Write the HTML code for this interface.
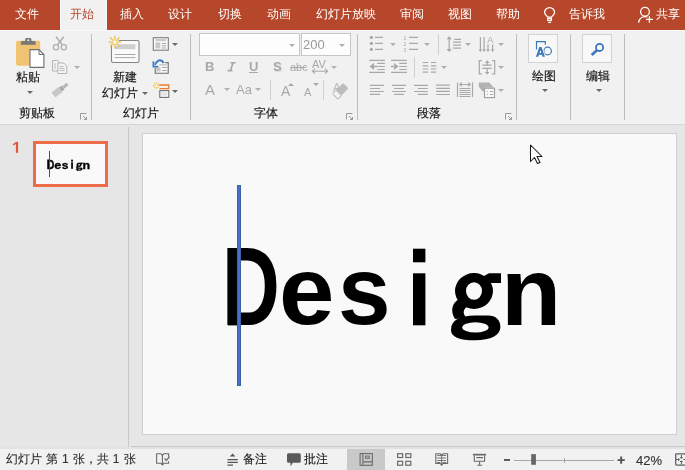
<!DOCTYPE html>
<html><head><meta charset="utf-8">
<style>
*{margin:0;padding:0;box-sizing:border-box}
html,body{width:685px;height:470px;overflow:hidden;background:#f1f1f1;font-family:"Liberation Sans",sans-serif}
.a{position:absolute}
.t{position:absolute;font-size:12px;line-height:12px;white-space:nowrap;will-change:transform}
#tabs{left:0;top:0;width:685px;height:30px;background:#b7472a}
.tab{color:#fff;font-size:12.4px}
#ribbon{left:0;top:30px;width:685px;height:95px;background:#f1f1f1;border-top:1px solid #f8fafa;border-bottom:1px solid #d6d6d6}
.sep{position:absolute;width:1px;background:#bdbdbd}
.lbl{color:#1a1a1a;-webkit-text-stroke:0.2px #1a1a1a}
.dk{color:#262626;-webkit-text-stroke:0.15px currentColor}
.arr{position:absolute;width:0;height:0;border-left:3px solid transparent;border-right:3px solid transparent;border-top:3px solid #6a6a6a}
.arrl{position:absolute;width:0;height:0;border-left:3px solid transparent;border-right:3px solid transparent;border-top:3px solid #b0b0b0}
#pane{left:0;top:125px;width:685px;height:322px;background:#e6e6e6}
#status{left:0;top:447px;width:685px;height:23px;background:#f1f1f1;border-top:2px solid #e2e2e2}
svg{position:absolute;overflow:visible}
.thumb div{-webkit-text-stroke:3px #000}
.thumb svg rect,.thumb svg path{stroke:#000;stroke-width:3px}
</style></head><body>

<!-- TAB BAR -->
<div id="tabs" class="a"></div>
<div class="a" style="left:60px;top:0;width:47px;height:31px;background:#f1f1f1;border-left:1px solid #f8fafa;border-right:1px solid #f8fafa"></div>
<div class="t tab" style="left:15px;top:8px">文件</div>
<div class="t" style="left:70px;top:8px;color:#b7472a;font-size:12.4px">开始</div>
<div class="t tab" style="left:119.5px;top:8px">插入</div>
<div class="t tab" style="left:168px;top:8px">设计</div>
<div class="t tab" style="left:217.5px;top:8px">切换</div>
<div class="t tab" style="left:266.5px;top:8px">动画</div>
<div class="t tab" style="left:316px;top:8px">幻灯片放映</div>
<div class="t tab" style="left:400px;top:8px">审阅</div>
<div class="t tab" style="left:448px;top:8px">视图</div>
<div class="t tab" style="left:496px;top:8px">帮助</div>
<div class="t tab" style="left:568.5px;top:8px">告诉我</div>
<div class="t tab" style="left:656px;top:8px">共享</div>
<svg style="left:0;top:0" width="685" height="29">
  <g fill="none" stroke="#fff" stroke-width="1.3">
    <path d="M547.8 17.2 C546 15.3 544.6 14 544.6 12.6 A5 5 0 0 1 554.6 12.6 C554.6 14 553.2 15.3 551.4 17.2 Z"/>
    <rect x="547.8" y="18.4" width="3.6" height="2"/><path d="M548.2 22.4h2.8"/>
    <circle cx="645" cy="11.7" r="4.4"/>
    <path d="M638.6 22.6 C639.2 19 641.8 16.6 645.2 16.6 C646 16.6 646.8 16.7 647.5 17"/>
    <path d="M649.4 16.2v6.6M646 19.4h6.9"/>
  </g>
</svg>

<!-- RIBBON -->
<div id="ribbon" class="a"></div>
<div class="sep" style="left:91px;top:34px;height:86px"></div>
<div class="sep" style="left:190px;top:34px;height:86px"></div>
<div class="sep" style="left:357px;top:34px;height:86px"></div>
<div class="sep" style="left:516px;top:34px;height:86px"></div>
<div class="sep" style="left:570px;top:34px;height:86px"></div>
<div class="sep" style="left:624px;top:34px;height:86px"></div>

<!-- clipboard group -->
<svg style="left:0;top:0" width="685" height="125">
  <!-- paste -->
  <rect x="16" y="40.8" width="24.2" height="25" rx="2" fill="#efc371"/>
  <path d="M20.8 44.8 V42.5 Q20.8 41 22.3 41 H25.2 V39.5 Q25.2 38.1 26.6 38.1 H30 Q31.4 38.1 31.4 39.5 V41 H34.2 Q35.7 41 35.7 42.5 V44.8 Z" fill="#777"/>
  <circle cx="28.3" cy="40.2" r="1" fill="#f1f1f1"/>
  <path d="M30 49.6 H39 L43.9 54.5 V67.4 H30 Z" fill="#fff" stroke="#6e6e6e" stroke-width="1.1"/>
  <path d="M39 49.6 V54.5 H43.9" fill="none" stroke="#6e6e6e" stroke-width="1"/>
  <!-- scissors -->
  <g stroke="#b0b0b0" stroke-width="1.3" fill="none">
    <circle cx="56" cy="47.2" r="2.6"/><circle cx="63.8" cy="47.2" r="2.6"/>
  </g>
  <path d="M57.3 45 L63.8 36.8 M62.5 45 L56 36.8" stroke="#b0b0b0" stroke-width="1.6" fill="none"/>
  <!-- copy -->
  <g stroke="#b4b4b4" stroke-width="1" fill="#f4f4f4">
    <path d="M52.5 60.5h5l2.5 2.5v8h-7.5z"/><path d="M57.8 63h6l3 3v7.5h-9z"/>
  </g>
  <path d="M54 64h2M54 66h2M54 68h2M59.5 66.5h4M59.5 68.5h5M59.5 70.5h5" stroke="#b4b4b4" stroke-width="0.9"/>
  <!-- format painter -->
  <g transform="translate(60.5 89.5) rotate(-38)">
    <rect x="-9" y="-3.2" width="9" height="6.4" fill="#c8c8c8"/>
    <rect x="0" y="-2.4" width="3" height="4.8" fill="#a8a8a8"/>
    <rect x="3" y="-1.6" width="6" height="3.2" fill="#b8b8b8"/>
  </g>
  <!-- launcher -->
  <g stroke="#9a9a9a" stroke-width="1" fill="none">
    <path d="M80.5 119.5v-6h6"/><path d="M83 116l3.5 3.5M86.5 117v2.5h-2.5"/>
  </g>

  <!-- new slide -->
  <rect x="111.5" y="40.5" width="27.5" height="22" rx="1.5" fill="#fafafa" stroke="#858585" stroke-width="1.1"/>
  <rect x="114.6" y="44.2" width="20.8" height="5" fill="#cfcfcf"/>
  <path d="M114.6 54.5h20.8M114.6 57.6h20.8" stroke="#a8a8a8" stroke-width="1"/>
  <circle cx="114.9" cy="42.1" r="4.2" fill="#f1f1f1"/>
  <g stroke="#f0c050" stroke-width="1.4">
    <path d="M114.9 35.8v3.3M114.9 45.1v3.3M108.6 42.1h3.3M117.9 42.1h3.3M110.4 37.6l2.3 2.3M117.1 44.3l2.3 2.3M119.4 37.6l-2.3 2.3M112.7 44.3l-2.3 2.3"/>
  </g>
  <circle cx="114.9" cy="42.1" r="2.3" fill="#fffdf5" stroke="#f0c050" stroke-width="1"/>
  <!-- layout -->
  <rect x="153.3" y="37.7" width="15" height="12.5" fill="#fafafa" stroke="#7e7e7e" stroke-width="1.1"/>
  <rect x="155.4" y="38.9" width="10.6" height="2.3" fill="#c8c8c8"/>
  <rect x="155.4" y="42.4" width="4.9" height="6" fill="#c8c8c8"/>
  <path d="M161.8 43.5h4.3M161.8 45.8h4.3M161.8 48h4.3" stroke="#9a9a9a" stroke-width="0.9"/>
  <!-- reset -->
  <rect x="155.2" y="62.6" width="13" height="10.6" fill="#fafafa"/>
  <path d="M155.2 67.8 V73.2 H168.2 V62.6 H165.2" fill="none" stroke="#6e6e6e" stroke-width="1.1"/>
  <rect x="159.2" y="64.1" width="7.5" height="1.6" fill="#c8c8c8"/>
  <rect x="156.2" y="67.2" width="4.4" height="4.3" fill="#c8c8c8"/>
  <path d="M162 67.5h4.7M162 70.5h4.7" stroke="#9a9a9a" stroke-width="0.9"/>
  <path d="M163.6 63.2 Q162.5 60.3 159.8 60.3 Q157.5 60.3 155 64.8" fill="none" stroke="#3b7cc2" stroke-width="1.9"/>
  <path d="M153.4 61.3 V66.6 H158.3" fill="none" stroke="#3b7cc2" stroke-width="1.7"/>
  <!-- section -->
  <path d="M159 85h9.7v3.6h-9.2" fill="none" stroke="#ee7d32" stroke-width="1.3"/>
  <rect x="159.8" y="90.6" width="9" height="6.8" fill="#fafafa" stroke="#707070" stroke-width="1.1"/>
  <rect x="161.3" y="92.2" width="5.8" height="3.4" fill="#e4e4e4"/>
  <g stroke="#f0c050" stroke-width="1"><path d="M156.3 82.2v6.8M152.9 85.6h6.8M153.9 83.2l4.8 4.8M158.7 83.2l-4.8 4.8"/></g>
  <circle cx="156.3" cy="85.6" r="1.3" fill="#fffdf5"/>
</svg>
<div class="t lbl" style="left:16px;top:71px;font-size:12px">粘贴</div>
<div class="arr" style="left:27px;top:91px"></div>
<div class="arrl" style="left:74px;top:66px"></div>
<div class="t lbl" style="left:19px;top:107px">剪贴板</div>
<div class="t lbl" style="left:113px;top:71px">新建</div>
<div class="t lbl" style="left:102px;top:87px">幻灯片</div>
<div class="arr" style="left:142px;top:92px"></div>
<div class="arr" style="left:172px;top:43px"></div>
<div class="arr" style="left:172px;top:90px"></div>
<div class="t lbl" style="left:123px;top:107px">幻灯片</div>

<!-- font group -->
<div class="a" style="left:199px;top:33px;width:101px;height:23px;background:#fdfdfd;border:1px solid #c6c6c6"></div>
<div class="a" style="left:301px;top:33px;width:50px;height:23px;background:#fdfdfd;border:1px solid #c6c6c6"></div>
<div class="arrl" style="left:289px;top:44px"></div>
<div class="arrl" style="left:339px;top:44px"></div>
<div class="t" style="left:303px;top:38px;font-size:13px;line-height:13px;color:#9a9a9a">200</div>
<div class="t" style="left:205px;top:61px;font-size:13px;font-weight:bold;color:#a8a8a8">B</div>

<div class="t" style="left:249px;top:61px;font-size:13px;font-weight:bold;color:#a8a8a8">U</div><div class="a" style="left:249px;top:72px;width:9px;height:1px;background:#a8a8a8"></div>
<div class="t" style="left:273px;top:61px;font-size:13px;font-weight:bold;color:#a8a8a8;text-shadow:1px 1px 1px #d8d8d8">S</div>
<div class="t" style="left:290px;top:62px;font-size:11px;line-height:11px;color:#a8a8a8">abc</div><div class="a" style="left:290px;top:67px;width:16px;height:1px;background:#a8a8a8"></div>
<div class="t" style="left:312px;top:59px;font-size:11px;line-height:11px;color:#a8a8a8">AV</div>
<svg style="left:0;top:0" width="685" height="125">
  <path d="M312.5 71.2h15M315 68.7l-2.5 2.5l2.5 2.5M325 68.7l2.5 2.5l-2.5 2.5" stroke="#a8a8a8" stroke-width="1.1" fill="none"/>
  <path d="M230.5 62.8h5M227.5 70.6h5M233 62.8l-2.5 7.8" stroke="#a8a8a8" stroke-width="1.6" fill="none"/>
  <path d="M291 96l5-12l5 12" fill="none" stroke="#fff" stroke-width="0"/>
  <!-- grow/shrink triangles -->
  <path d="M291 83l3 3h-6z" fill="#a8a8a8"/>
  <path d="M313 83h6l-3 3z" fill="#a8a8a8"/>
  <!-- eraser -->
  <g transform="translate(340.5 91) rotate(-45)"><rect x="-7.5" y="-3.8" width="15" height="7.6" rx="1.5" fill="#bdbdbd"/><rect x="-7.5" y="-3.8" width="5" height="7.6" rx="1" fill="#f4f4f4" stroke="#bdbdbd" stroke-width="1"/></g>
</svg>
<div class="arrl" style="left:331px;top:66px"></div>
<div class="t" style="left:205px;top:82px;font-size:15px;line-height:15px;color:#a8a8a8">A</div>
<div class="arrl" style="left:224px;top:88px"></div>
<div class="t" style="left:236px;top:83px;font-size:13px;line-height:13px;color:#a8a8a8">Aa</div>
<div class="arrl" style="left:255px;top:88px"></div>
<div class="sep" style="left:270px;top:80px;height:20px;background:#d0d0d0"></div>
<div class="t" style="left:281px;top:84px;font-size:14px;line-height:14px;color:#a8a8a8">A</div>
<div class="t" style="left:304px;top:87px;font-size:11px;line-height:11px;color:#a8a8a8">A</div>
<div class="sep" style="left:323px;top:80px;height:20px;background:#d0d0d0"></div>
<div class="t" style="left:333px;top:82px;font-size:11px;line-height:11px;color:#b8b8b8">A</div>
<div class="t lbl" style="left:254px;top:107px">字体</div>

<!-- paragraph group -->
<svg style="left:0;top:0" width="685" height="125">
  <g fill="#a8a8a8">
    <circle cx="371.4" cy="37.4" r="1.6"/><circle cx="371.4" cy="43.4" r="1.6"/><circle cx="371.4" cy="49.3" r="1.6"/>
  </g>
  <g stroke="#a8a8a8" stroke-width="1.2" fill="none">
    <path d="M375 37.4h8M375 43.4h8M375 49.3h8"/>
    <path d="M409 37.4h9M409 43.4h9M409 49.3h9"/>
    <!-- indent -->
    <path d="M369.2 60.3h15.7M377.2 63.4h7.7M377.2 66.5h7.7M377.2 69.5h7.7M369.2 72.4h15.7"/>
    <path d="M391.2 60.3h15.7M399.2 63.4h7.7M399.2 66.5h7.7M399.2 69.5h7.7M391.2 72.4h15.7"/>
    <!-- columns -->
    <path d="M422.7 62.5h5.5M422.7 65.8h5.5M422.7 69h5.5M422.7 72.2h5.5M430.8 62.5h5.5M430.8 65.8h5.5M430.8 69h5.5M430.8 72.2h5.5"/>
    <!-- line spacing -->
    <path d="M449.2 37.5v13.5M454.3 39.4h6.7M453.1 42.2h7.9M453.1 45.1h7.9M453.1 48.1h7.9"/>
    <!-- text direction -->
    <path d="M480.4 37v14M484.1 37v14M488 44.5v6.5M492.6 44.5v6.5"/>
    <!-- align text -->
    <path d="M481.9 60.6h-2.6v13.3h2.6M492.1 60.6h2.6v13.3h-2.6M487.2 61v5M487.2 69v5M482.4 65.2h9.2M482.4 68.3h9.2"/>
    <!-- align rows -->
    <path d="M369.9 85.4h14M369.9 88.5h10.2M369.9 91.5h14M369.9 94.4h10.2"/>
    <path d="M392.1 85.4h13.8M394.1 88.5h9.9M392.1 91.5h13.8M394.1 94.4h9.9"/>
    <path d="M414 85.4h13.8M417.9 88.5h9.9M414 91.5h13.8M417.9 94.4h9.9"/>
    <path d="M436.1 85.1h13.8M436.1 88.3h13.8M436.1 91.4h13.8M436.1 94.5h13.8"/>
    <!-- distributed -->
    <path d="M457.5 82.4v14.6M472.5 82.4v14.6M460 84.5h10"/>
    <path d="M459.5 88.5h11M459.5 90.5h11M459.5 92.5h11M459.5 94.5h11M459.5 96.5h11" stroke-width="1"/>
    <path d="M461.8 82.4l-2 2l2 2M468.2 82.4l2 2l-2 2"/>
    <!-- smartart box -->
    <rect x="484.5" y="88.2" width="10" height="9.4" fill="#f8f8f8" stroke="#a0a0a0"/>
  </g>
  <g fill="#a8a8a8">
    <path d="M369.5 66.5l4.5-3.5v7z M374 65.8h3v1.5h-3z"/>
    <path d="M398.5 66.5l-4.5-3.5v7z M391 65.8h3.5v1.5h-3.5z"/>
    <path d="M449.2 36.3l-2.7 3h5.4z M449.2 52l-2.7-3h5.4z"/>
    <path d="M480.4 52l-1.8-2.6h3.6z M484.1 52l-1.8-2.6h3.6z M488 52l-1.8-2.6h3.6z M492.6 52l-1.8-2.6h3.6z"/>
    <path d="M487.2 60.3l-2.3 2.6h4.6z M487.2 74.5l-2.3-2.6h4.6z"/>
    <path d="M478.8 82.4h10.5l4.5 5.3h-9.8v3.5h-1.7l-3.5 -4.4z" fill="#b2b2b2"/>
  </g>
  <text x="487.3" y="43.4" font-family="Liberation Sans" font-size="9" fill="#a8a8a8">A</text>
  <text x="403.6" y="40.3" font-family="Liberation Sans" font-size="5" fill="#a8a8a8">1</text>
  <text x="403.6" y="46.3" font-family="Liberation Sans" font-size="5" fill="#a8a8a8">2</text>
  <text x="403.6" y="52.2" font-family="Liberation Sans" font-size="5" fill="#a8a8a8">3</text>
  <g stroke="#a8a8a8" stroke-width="1" fill="none"><path d="M487 91.5h1M490 91.5h3M487 94.5h1M490 94.5h3"/></g>
  <!-- launcher -->
  <g stroke="#9a9a9a" stroke-width="1" fill="none">
    <path d="M505.5 119.5v-6h6"/><path d="M508 116l3.5 3.5M511.5 117v2.5h-2.5"/>
    <path d="M346.5 119.5v-6h6"/><path d="M349 116l3.5 3.5M352.5 117v2.5h-2.5"/>
  </g>
  <rect x="438" y="34" width="1" height="21" fill="#d0d0d0"/>
  <rect x="414" y="57" width="1" height="21" fill="#d0d0d0"/>
</svg>
<div class="arrl" style="left:390px;top:43px"></div>
<div class="arrl" style="left:424px;top:43px"></div>
<div class="arrl" style="left:465px;top:43px"></div>
<div class="arrl" style="left:498px;top:43px"></div>
<div class="arrl" style="left:441px;top:66px"></div>
<div class="arrl" style="left:498px;top:66px"></div>
<div class="arrl" style="left:498px;top:89px"></div>
<div class="t lbl" style="left:417px;top:107px">段落</div>

<!-- drawing / editing -->
<div class="a" style="left:528px;top:34px;width:30px;height:29px;background:#f8f8f8;border:1px solid #d2d2d2"></div>
<div class="a" style="left:582px;top:34px;width:30px;height:29px;background:#f8f8f8;border:1px solid #d2d2d2"></div>
<svg style="left:0;top:0" width="685" height="125">
  <path d="M536.5 49.5 V41.6 H545.3 V44.8" fill="none" stroke="#3c78b8" stroke-width="1.2"/>
  <circle cx="547.6" cy="51" r="3.8" fill="none" stroke="#3c78b8" stroke-width="1.2"/>
  <path d="M535.9 56.8 L539.3 47 H541.5 L544.9 56.8 Z" fill="#f8f8f8" stroke="#f8f8f8" stroke-width="1.6"/>
  <path d="M535.9 56.8 L539.3 47 H541.5 L544.9 56.8 H542.6 L541.9 54.7 H538.9 L538.2 56.8 Z M539.5 53 H541.3 L540.4 50 Z" fill="#3c78b8" fill-rule="evenodd"/>
  <circle cx="599.6" cy="47.4" r="3.6" fill="none" stroke="#3c78b8" stroke-width="1.8"/>
  <path d="M597.3 50 L591.6 54.9" stroke="#3c78b8" stroke-width="2.7"/>
</svg>
<div class="t lbl" style="left:532px;top:70px">绘图</div>
<div class="t lbl" style="left:586px;top:70px">编辑</div>
<div class="arr" style="left:542px;top:89px"></div>
<div class="arr" style="left:596px;top:89px"></div>

<!-- PANE -->
<div id="pane" class="a"></div>
<div class="a" style="left:128px;top:127px;width:1px;height:320px;background:#c8c8c8"></div>
<div class="a" style="left:131px;top:446px;width:554px;height:1px;background:#c8c8c8"></div>
<svg style="left:0;top:0" width="30" height="160"><rect x="15.9" y="141.8" width="2.2" height="11" fill="#e05a38"/><path d="M16.5 142.6 L13.2 144.8" stroke="#e05a38" stroke-width="1.6"/></svg>
<div class="a" style="left:33px;top:141px;width:75px;height:46px;border:3px solid #ed6d4a;background:#f9f9f9"></div>
<div class="a" style="left:142px;top:133px;width:535px;height:302px;border:1px solid #d0d0d0;background:#f9f9f9"></div>


<!-- DESIGN TEXT -->
<div class="a" style="left:0;top:0;width:685px;height:470px">
<div class="a" style="left:222.2px;top:230.2px;font:bold 100px/100px 'Liberation Sans',sans-serif;color:#000;transform-origin:0 0;transform:scale(0.8,1.12)">D</div>
<div class="a" style="left:279.3px;top:243.3px;font:bold 100px/100px 'Liberation Sans',sans-serif;color:#000;transform-origin:0 0;transform:scale(0.996,0.958)">e</div>
<div class="a" style="left:337.9px;top:243.3px;font:bold 100px/100px 'Liberation Sans',sans-serif;color:#000;transform-origin:0 0;transform:scale(0.945,0.958)">s</div>
<div class="a" style="left:500.8px;top:243.8px;font:bold 100px/100px 'Liberation Sans',sans-serif;color:#000;transform-origin:0 0;transform:scale(0.985,0.956)">n</div>
<svg style="left:0;top:0" width="685" height="470">
  <rect x="228" y="248.4" width="13" height="77" fill="#000"/>
  <rect x="413" y="248.7" width="12.4" height="13.6" fill="#000"/>
  <rect x="413" y="273.3" width="12.4" height="52" fill="#000"/>
  <path fill="#000" fill-rule="evenodd" d="M455 291 a19 17.9 0 1 0 38 0 a19 17.9 0 1 0 -38 0 Z M466 291 a8 8.75 0 1 0 16 0 a8 8.75 0 1 0 -16 0 Z"/>
  <path fill="#000" d="M484 276 L489 273.2 L501 273.2 L501 283 L488 283 Z"/>
  <path fill="#000" fill-rule="evenodd" d="M451 330 C451 320 460 315.4 475 315.4 L488 315.4 C496 315.4 500.4 320 500.4 327 C500.4 335 491 340.3 475 340.3 C459 340.3 451 337 451 330 Z M462.2 327.4 a13.2 5.2 0 1 0 26.4 0 a13.2 5.2 0 1 0 -26.4 0 Z"/>
  <path fill="#000" d="M459 299 C452 303 450 311 455 319 L467 318 C462 314 463 309 468 306 Z"/>
</svg>

</div>
<div class="a" style="left:237px;top:185px;width:4px;height:201px;background:#4472c4;border:1px solid #3a62a8"></div>
<!-- THUMB -->
<div class="a thumb" style="left:0;top:0;width:685px;height:470px;transform-origin:0 0;transform:translate(37px,146.6px) scale(0.127,0.116) translate(-143px,-134px);will-change:transform">
<div class="a" style="left:222.2px;top:230.2px;font:bold 100px/100px 'Liberation Sans',sans-serif;color:#000;transform-origin:0 0;transform:scale(0.8,1.12)">D</div>
<div class="a" style="left:279.3px;top:243.3px;font:bold 100px/100px 'Liberation Sans',sans-serif;color:#000;transform-origin:0 0;transform:scale(0.996,0.958)">e</div>
<div class="a" style="left:337.9px;top:243.3px;font:bold 100px/100px 'Liberation Sans',sans-serif;color:#000;transform-origin:0 0;transform:scale(0.945,0.958)">s</div>
<div class="a" style="left:500.8px;top:243.8px;font:bold 100px/100px 'Liberation Sans',sans-serif;color:#000;transform-origin:0 0;transform:scale(0.985,0.956)">n</div>
<svg style="left:0;top:0" width="685" height="470">
  <rect x="228" y="248.4" width="13" height="77" fill="#000"/>
  <rect x="413" y="248.7" width="12.4" height="13.6" fill="#000"/>
  <rect x="413" y="273.3" width="12.4" height="52" fill="#000"/>
  <path fill="#000" fill-rule="evenodd" d="M455 291 a19 17.9 0 1 0 38 0 a19 17.9 0 1 0 -38 0 Z M466 291 a8 8.75 0 1 0 16 0 a8 8.75 0 1 0 -16 0 Z"/>
  <path fill="#000" d="M484 276 L489 273.2 L501 273.2 L501 283 L488 283 Z"/>
  <path fill="#000" fill-rule="evenodd" d="M451 330 C451 320 460 315.4 475 315.4 L488 315.4 C496 315.4 500.4 320 500.4 327 C500.4 335 491 340.3 475 340.3 C459 340.3 451 337 451 330 Z M462.2 327.4 a13.2 5.2 0 1 0 26.4 0 a13.2 5.2 0 1 0 -26.4 0 Z"/>
  <path fill="#000" d="M459 299 C452 303 450 311 455 319 L467 318 C462 314 463 309 468 306 Z"/>
</svg>

</div>
<div class="a" style="left:49px;top:151px;width:1px;height:26px;background:#2f5597"></div>
<!-- cursor -->
<svg style="left:0;top:0" width="685" height="470">
  <path d="M530.5 145 V161.5 L534.5 157.5 L537.5 163.5 L540 162.5 L537 156.5 L542 156.5 Z" fill="#fff" stroke="#1a1a1a" stroke-width="1.05" stroke-linejoin="round"/>
</svg>

<!-- STATUS -->
<div id="status" class="a"></div>
<div class="a" style="left:347px;top:449px;width:38px;height:21px;background:#c9c9c9"></div>
<svg style="left:0;top:0" width="685" height="470">
  <!-- book check -->
  <path d="M161 453.8 H156.6 V463.2 H161 L162.4 464.8 L163.8 463.2 H168.6 V461.2 M168.6 456.8 V453.8 H163.8 L162.4 455.2 L161 453.8 M162.4 455.2 V464.8" fill="none" stroke="#6a6a6a" stroke-width="1.1"/>
  <path d="M162.4 465 L161.2 463.8 M162.4 465 L163.6 463.8" stroke="#6a6a6a" stroke-width="1"/>
  <path d="M164.6 458.4 L166.3 460.4 L169.6 456.6" fill="none" stroke="#6a6a6a" stroke-width="1.3"/>
  <!-- notes -->
  <path d="M229.8 456.6 L232.6 453.5 L235.4 456.6 Z" fill="#555"/>
  <path d="M227.5 459.6h10.3M227.5 462.3h10.3M227.5 465.2h5.5" stroke="#555" stroke-width="1.2"/>
  <!-- comment -->
  <path d="M288.5 453.2 H299.3 Q300.8 453.2 300.8 454.7 V461.2 Q300.8 462.7 299.3 462.7 H292.8 L290.5 466.6 V462.7 H288.5 Q287 462.7 287 461.2 V454.7 Q287 453.2 288.5 453.2 Z" fill="#5a5a5a"/>
  <!-- normal view -->
  <rect x="360.1" y="453.6" width="12.2" height="11.7" fill="none" stroke="#6a6a6a" stroke-width="1.1"/>
  <path d="M362.9 453.6 V465.3 M362.9 461.9 H372.3" stroke="#6a6a6a" stroke-width="1.1"/>
  <rect x="365.6" y="456.1" width="3.6" height="2.2" fill="none" stroke="#6a6a6a" stroke-width="1"/>
  <!-- grid -->
  <g fill="none" stroke="#6a6a6a" stroke-width="1.2">
    <rect x="397.6" y="453.7" width="5" height="3.8"/><rect x="405.8" y="453.7" width="5" height="3.8"/>
    <rect x="397.6" y="461.3" width="5" height="3.9"/><rect x="405.8" y="461.3" width="5" height="3.9"/>
  </g>
  <!-- reading -->
  <path d="M440.2 453.8 H435.8 V463.4 H440.2 L441.6 465.2 L443 463.4 H447.6 V453.8 H443 L441.6 455 Z" fill="none" stroke="#6a6a6a" stroke-width="1.1"/>
  <path d="M437.2 455.5h8.8M437.2 458h8.8M437.2 460.5h8.8M437.2 462.5h3M442.6 462.5h3.4M441.6 455v10.6" stroke="#6a6a6a" stroke-width="0.9"/>
  <!-- slideshow -->
  <rect x="472.9" y="453.8" width="13.2" height="1.7" fill="#6a6a6a"/>
  <path d="M474.3 455.5 V461.2 H484.6 V455.5" fill="none" stroke="#6a6a6a" stroke-width="1.1"/>
  <path d="M476.4 457.6h6.6M479.6 461.2v4M477.2 465.3h4.9" stroke="#6a6a6a" stroke-width="1.1"/>
  <!-- zoom -->
  <rect x="504" y="459" width="6" height="1.9" fill="#555"/>
  <rect x="514" y="460" width="100" height="1" fill="#a8a8a8"/>
  <rect x="564" y="458" width="1" height="5" fill="#a8a8a8"/>
  <rect x="531.2" y="454.1" width="4.7" height="10.7" fill="#666"/>
  <path d="M617.5 460.1h7.3M621.15 456.4v7.3" stroke="#555" stroke-width="1.9"/>
  <!-- fit -->
  <rect x="675.7" y="453.8" width="12" height="11.3" rx="0.8" fill="none" stroke="#606060" stroke-width="1.3"/>
  <path d="M681.4 455v3.5M681.4 460.6v4M676 459.5h3.5M683.4 459.5h3M680 457.7h2.8M680 461.5h2.8M678.7 458.2v2.8" stroke="#606060" stroke-width="1"/>
</svg>
<div class="t dk" style="left:6px;top:453px;color:#333;word-spacing:0.7px">幻灯片 第 1 张，共 1 张</div>
<div class="t dk" style="left:243px;top:453px;color:#1a1a1a">备注</div>
<div class="t dk" style="left:304px;top:453px;color:#1a1a1a">批注</div>
<div class="t dk" style="left:636px;top:454px;font-size:13px;line-height:13px;color:#333">42%</div>

</body></html>
